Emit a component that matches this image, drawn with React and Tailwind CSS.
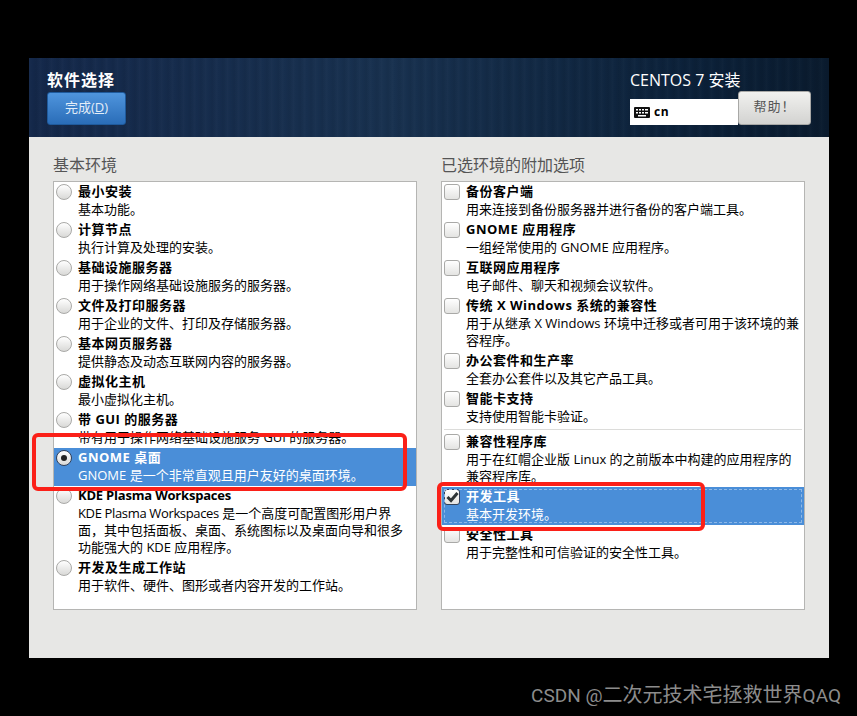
import React from "react";

const font = { fontFamily: '"Open Sans", "Noto Sans CJK SC", sans-serif' };

const baseEnvs = [
  { title: "最小安装", lines: ["基本功能。"] },
  { title: "计算节点", lines: ["执行计算及处理的安装。"] },
  { title: "基础设施服务器", lines: ["用于操作网络基础设施服务的服务器。"] },
  { title: "文件及打印服务器", lines: ["用于企业的文件、打印及存储服务器。"] },
  { title: "基本网页服务器", lines: ["提供静态及动态互联网内容的服务器。"] },
  { title: "虚拟化主机", lines: ["最小虚拟化主机。"] },
  { title: "带 GUI 的服务器", lines: ["带有用于操作网络基础设施服务 GUI 的服务器。"] },
  { title: "GNOME 桌面", lines: ["GNOME 是一个非常直观且用户友好的桌面环境。"], selected: true },
  {
    title: <span className="tracking-[-0.2px]">KDE Plasma Workspaces</span>,
    lines: [
      <>
        <span className="tracking-[-0.35px]">KDE Plasma Workspaces</span> 是一个高度可配置图形用户界
      </>,
      "面，其中包括面板、桌面、系统图标以及桌面向导和很多",
      "功能强大的 KDE 应用程序。",
    ],
  },
  { title: "开发及生成工作站", lines: ["用于软件、硬件、图形或者内容开发的工作站。"] },
];

const addonsTop = [
  { title: "备份客户端", lines: ["用来连接到备份服务器并进行备份的客户端工具。"] },
  { title: "GNOME 应用程序", lines: ["一组经常使用的 GNOME 应用程序。"] },
  { title: "互联网应用程序", lines: ["电子邮件、聊天和视频会议软件。"] },
  {
    title: "传统 X Windows 系统的兼容性",
    lines: ["用于从继承 X Windows 环境中迁移或者可用于该环境的兼", "容程序。"],
  },
  { title: "办公套件和生产率", lines: ["全套办公套件以及其它产品工具。"] },
  { title: "智能卡支持", lines: ["支持使用智能卡验证。"] },
];

const addonsBottom = [
  {
    title: "兼容性程序库",
    lines: ["用于在红帽企业版 Linux 的之前版本中构建的应用程序的", "兼容程序库。"],
  },
  { title: "开发工具", lines: ["基本开发环境。"], selected: true, focused: true },
  { title: "安全性工具", lines: ["用于完整性和可信验证的安全性工具。"] },
];

const Radio = ({ on }) => (
  <span
    className={`mt-0.5 flex h-4 w-4 shrink-0 items-center justify-center rounded-full border bg-gradient-to-b from-white to-[#d9d9d7] ${
      on ? "border-[#33415a]" : "border-[#a9a9a7]"
    }`}
  >
    {on && <span className="h-1.5 w-1.5 rounded-full bg-[#222]" />}
  </span>
);

const Check = ({ on }) => (
  <span
    className={`mt-0.5 flex h-4 w-4 shrink-0 items-center justify-center rounded-[3px] border bg-gradient-to-b from-white to-[#e4e4e2] ${
      on ? "border-[#33415a]" : "border-[#a9a9a7]"
    }`}
  >
    {on && (
      <svg width="13" height="12" viewBox="0 0 13 12" fill="none">
        <path d="M1.5 6 5 9.5 11.5 2" stroke="#2e3436" strokeWidth="3" />
      </svg>
    )}
  </span>
);

const Row = ({ item, mark }) => (
  <div
    className={`relative flex gap-1.5 pl-0.5 ${
      item.selected ? "bg-[#4a8ed8] text-white" : "text-black"
    }`}
  >
    {item.focused && (
      <span className="absolute inset-x-[2px] inset-y-[2px] border border-dashed border-[#8fb8e6]" />
    )}
    {mark}
    <div className="pb-0.5 text-[13px] whitespace-nowrap">
      <div className="h-[19px] leading-[18px] font-bold tracking-[0.5px]">{item.title}</div>
      {item.lines.map((line, i) => (
        <div key={i} className="h-[17px] leading-[17px]">
          {line}
        </div>
      ))}
    </div>
  </div>
);

const App = () => {
  return (
    <div className="relative h-[716px] w-[857px] overflow-hidden bg-black pt-[58px] pl-[29px]" style={font}>
      <div className="h-[600px] w-[800px] bg-[#e7e7e5]">
        <div className="flex h-[79px] justify-between bg-[repeating-linear-gradient(90deg,rgba(255,255,255,0.018)_0px,rgba(255,255,255,0)_3px,rgba(0,0,0,0.05)_7px,rgba(255,255,255,0.012)_11px),linear-gradient(90deg,#14284a,#18314f_45%,#0b2038_85%,#0a1b2e)] pr-[18px] pl-[18px]">
          <div className="pt-3">
            <div className="h-5 text-base leading-5 font-bold tracking-[1px] text-white">软件选择</div>
            <button
              type="button"
              className="mt-0.5 h-[33px] w-[79px] rounded-[3px] border border-[#1f5a9c] bg-gradient-to-b from-[#4f95dd] to-[#2a6db8] pb-px text-[13px] text-[#e3edf8]"
            >
              完成(<span className="underline">D</span>)
            </button>
          </div>
          <div className="flex flex-col items-start pt-3">
            <div className="h-5 text-base leading-5 text-white">CENTOS 7 安装</div>
            <div className="mt-px flex items-end">
              <div className="flex h-[26px] w-[108px] items-center gap-1 bg-white pl-1">
                <svg width="16" height="11" viewBox="0 0 16 11">
                  <rect width="16" height="11" rx="1" fill="#111" />
                  <path
                    d="M2 2h2v1.5H2zM5 2h2v1.5H5zM8 2h2v1.5H8zM11 2h3v1.5h-3zM2 5h2v1.5H2zM5 5h2v1.5H5zM8 5h2v1.5H8zM11 5h3v1.5h-3zM4 8h8v1.5H4z"
                    fill="#fff"
                  />
                </svg>
                <span className="text-[12px] font-bold tracking-[0.5px] text-black">cn</span>
              </div>
              <button
                type="button"
                className="h-[34px] w-[73px] rounded-[3px] border border-[#a8a8a6] bg-gradient-to-b from-[#f1f1ef] to-[#d3d3d1] pb-0.5 text-[13px] tracking-[1px] text-[#555]"
              >
                帮助！
              </button>
            </div>
          </div>
        </div>

        <div className="flex gap-6 px-6 pt-[18px]">
          <div className="w-[364px]">
            <div className="h-[26px] text-base leading-5 text-[#555]">基本环境</div>
            <div className="h-[429px] border border-[#b5b5b3] bg-white">
              {baseEnvs.map((item, i) => (
                <Row key={i} item={item} mark={<Radio on={item.selected} />} />
              ))}
            </div>
          </div>
          <div className="w-[364px]">
            <div className="h-[26px] text-base leading-5 text-[#555]">已选环境的附加选项</div>
            <div className="h-[429px] border border-[#b5b5b3] bg-white">
              {addonsTop.map((item, i) => (
                <Row key={i} item={item} mark={<Check on={item.selected} />} />
              ))}
              <div className="flex h-[5px] items-center px-0.5">
                <div className="h-px w-full bg-[#dcdcda]" />
              </div>
              {addonsBottom.map((item, i) => (
                <Row key={i} item={item} mark={<Check on={item.selected} />} />
              ))}
            </div>
          </div>
        </div>
      </div>

      <div
        className="mt-[26px] pr-[16px] text-right text-[19px] leading-[22px] whitespace-nowrap text-[#8c8c8c]"
        style={{ fontFamily: 'Roboto, "Noto Sans CJK SC", sans-serif' }}
      >
        CSDN @<span className="text-[20px]">二次元技术宅拯救世界</span>QAQ
      </div>

      {/* red annotation boxes drawn over the screenshot */}
      <div className="absolute top-[433px] left-[32px] h-[58px] w-[375px] rounded-[6px] border-4 border-[#fb2018]" />
      <div className="absolute top-[482px] left-[437px] h-[49px] w-[268px] rounded-[6px] border-4 border-[#fb2018]" />
    </div>
  );
};

export default App;
